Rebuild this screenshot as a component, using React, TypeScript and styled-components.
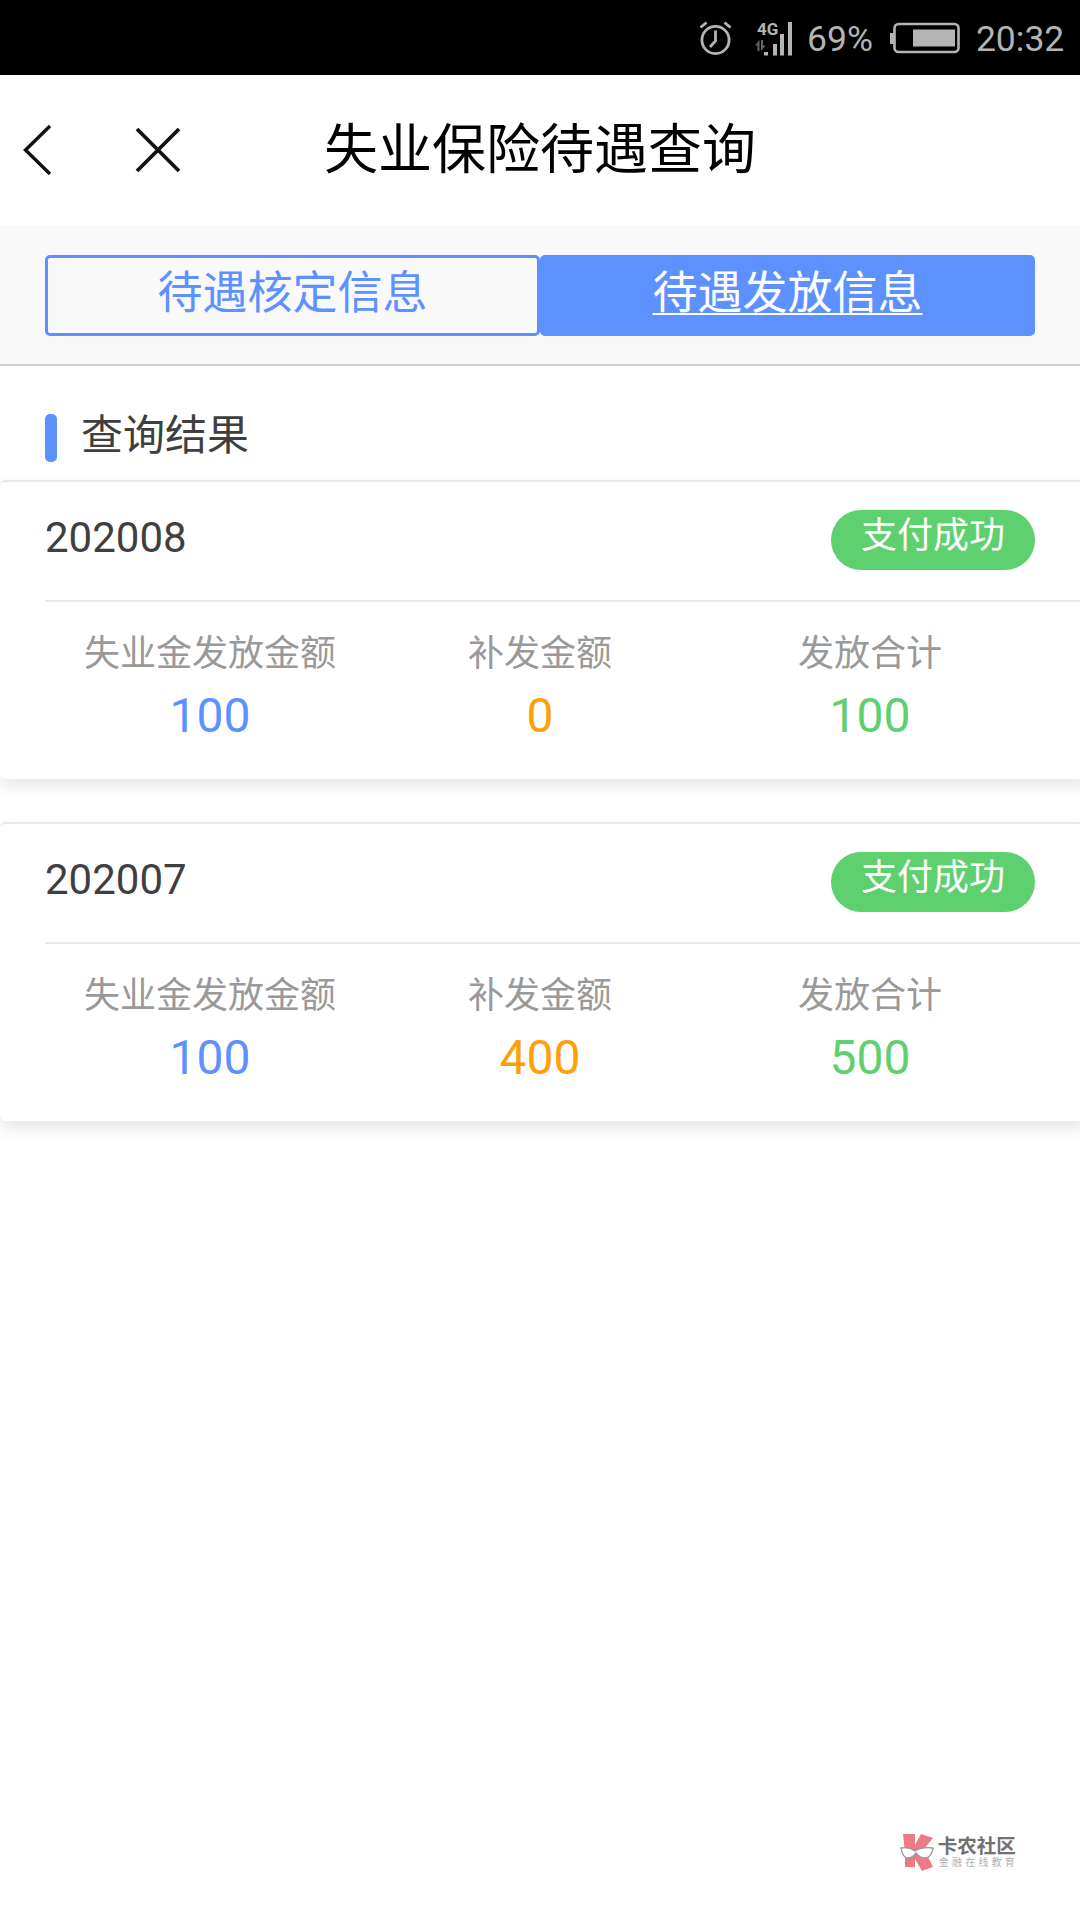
import React from "react";
import styled, { createGlobalStyle } from "styled-components";

const GlobalStyle = createGlobalStyle`
  html, body {
    margin: 0;
    padding: 0;
    background: #fff;
  }
  * {
    box-sizing: border-box;
  }
`;

const FONT = `Roboto, "Noto Sans CJK SC", sans-serif`;

const colors = {
  blue: "#5c91ff",
  orange: "#ff9f0a",
  green: "#5fd070",
};

const Page = styled.div`
  width: 1080px;
  height: 1920px;
  display: flex;
  flex-direction: column;
  overflow: hidden;
  font-family: ${FONT};
  background: #fff;
`;

const StatusBar = styled.div`
  height: 75px;
  background: #000;
  color: #b4b4b4;
  display: flex;
  align-items: center;
  padding: 0 12px 0 699px;
`;

const StatusText = styled.span<{ $ml: number }>`
  font-size: 35.5px;
  line-height: 75px;
  padding-top: 3px;
  margin-left: ${(p) => p.$ml}px;
`;

const StatusIcon = styled.svg<{ $ml?: number }>`
  display: block;
  flex: none;
  margin-left: ${(p) => p.$ml || 0}px;
`;

const NavBar = styled.div`
  height: 150px;
  display: flex;
  align-items: center;
  position: relative;
  padding-left: 22px;
`;

const NavIcon = styled.svg<{ $ml?: number }>`
  display: block;
  margin-left: ${(p) => p.$ml || 0}px;
`;

const Title = styled.div`
  position: absolute;
  left: 0;
  right: 0;
  text-align: center;
  font-size: 54px;
  color: #000;
  line-height: 157px;
`;

const TabBar = styled.div`
  height: 141px;
  padding: 30px 45px 0;
  background: #f9f9f9;
  border-bottom: 2px solid #cfcfcf;
  display: flex;
`;

const Tab = styled.div<{ $active?: boolean }>`
  flex: 1;
  height: 81px;
  border-radius: 5px;
  border: 3px solid ${colors.blue};
  background: ${(p) => (p.$active ? colors.blue : "transparent")};
  color: ${(p) => (p.$active ? "#fff" : colors.blue)};
  text-decoration: ${(p) => (p.$active ? "underline" : "none")};
  text-decoration-thickness: 2px;
  text-underline-offset: 4px;
  font-size: 45px;
  line-height: 72px;
  text-align: center;
`;

const SectionHead = styled.div`
  height: 114px;
  padding-left: 45px;
  display: flex;
  align-items: flex-start;
`;

const SectionMark = styled.div`
  width: 12px;
  height: 48px;
  margin-top: 48px;
  border-radius: 5px;
  background: ${colors.blue};
  margin-right: 24px;
`;

const SectionTitle = styled.div`
  font-size: 42px;
  line-height: 60px;
  margin-top: 40px;
  color: #3f3f3f;
`;

const Card = styled.div<{ $mt?: number }>`
  margin-top: ${(p) => p.$mt || 0}px;
  margin-right: -8px;
  height: 299px;
  background: #fff;
  border-top: 2px solid #e8e8e8;
  border-radius: 6px;
  box-shadow: 0 7px 16px rgba(0, 0, 0, 0.1);
`;

const CardHead = styled.div`
  height: 120px;
  margin-left: 45px;
  margin-right: 8px;
  padding: 28px 45px 0 0;
  border-bottom: 2px solid #e8e8e8;
  display: flex;
  align-items: flex-start;
  justify-content: space-between;
`;

const Period = styled.div`
  font-size: 42px;
  line-height: 60px;
  margin-top: -2px;
  color: #3f3f3f;
`;

const Pill = styled.div`
  width: 204px;
  height: 60px;
  border-radius: 30px;
  background: ${colors.green};
  color: #fff;
  font-size: 36px;
  line-height: 53px;
  text-align: center;
`;

const Stats = styled.div`
  display: grid;
  grid-template-columns: repeat(3, 330px);
  padding: 27px 45px 0;
`;

const Stat = styled.div`
  text-align: center;
`;

const StatLabel = styled.div`
  font-size: 36px;
  line-height: 50px;
  color: #999;
`;

const StatValue = styled.div<{ $color: string }>`
  font-size: 48px;
  line-height: 74px;
  color: ${(p) => p.$color};
`;

const Footer = styled.div`
  margin-top: auto;
  padding: 0 62px 49px 0;
  display: flex;
  justify-content: flex-end;
  align-items: center;
  gap: 4px;
`;

const LogoText = styled.div`
  display: flex;
  flex-direction: column;
`;

const LogoName = styled.div`
  font-size: 19.5px;
  line-height: 21px;
  font-weight: 700;
  color: #707070;
`;

const LogoSub = styled.div`
  font-size: 10px;
  line-height: 11px;
  letter-spacing: 3.2px;
  color: #b0b0b0;
  padding-left: 1px;
`;

const AlarmIcon = () => (
  <StatusIcon width="34" height="36" viewBox="0 0 34 36" fill="none" stroke="#b4b4b4" strokeWidth="2.8">
    <circle cx="16.5" cy="20" r="13.6" />
    <path d="M16.5 10.5v10.5l-5.5 6" />
    <path d="M1.5 7.5l6-5M31.5 7.5l-6-5" />
  </StatusIcon>
);

const SignalIcon = () => (
  <StatusIcon $ml={22} width="38" height="36" viewBox="0 0 38 36" fill="#b4b4b4">
    <text x="2" y="15" fontFamily="Roboto, sans-serif" fontWeight="700" fontSize="17">
      4G
    </text>
    <rect x="9" y="32" width="4" height="3.5" />
    <rect x="18" y="24" width="4" height="11.5" />
    <rect x="25" y="14" width="4" height="21.5" />
    <rect x="33" y="2" width="4" height="33.5" />
    <path d="M0 25.5l4.5-5.5v11h-2v-5.5zM6 20h2v5.5h2.5L6 31z" fill="#666" />
  </StatusIcon>
);

const BatteryIcon = () => (
  <StatusIcon $ml={17} width="70" height="32" viewBox="0 0 70 32" fill="none">
    <rect x="0" y="11" width="4" height="11" fill="#b4b4b4" />
    <rect x="4.5" y="2" width="64" height="28" rx="4" stroke="#b4b4b4" strokeWidth="2.6" />
    <rect x="23" y="7.5" width="42" height="17" fill="#b4b4b4" />
  </StatusIcon>
);

const BackIcon = () => (
  <NavIcon width="34" height="52" viewBox="0 0 34 52" fill="none" stroke="#111" strokeWidth="3.4">
    <path d="M28 2L3.5 26 28 50" />
  </NavIcon>
);

const CloseIcon = () => (
  <NavIcon $ml={79} width="46" height="46" viewBox="0 0 46 46" fill="none" stroke="#111" strokeWidth="3.8">
    <path d="M2 2l42 42M44 2L2 44" />
  </NavIcon>
);

const KLogo = () => (
  <svg width="34" height="38" viewBox="0 0 34 38">
    <path d="M3 1h12v11l6-11 12 4-9 11 9 18-11 4-7-12v8H5V20z" fill="#ee7a85" />
    <path d="M1 15c5-1 10 0 14 3 5-3 11-4 18-3-1 6-3 10-8 10-5 0-7-3-9-5-2 3-4 5-8 5-4 0-6-4-7-10z" fill="#fff" stroke="#999" strokeWidth="1.4" />
  </svg>
);

type RecordItem = {
  period: string;
  reissue: string;
  total: string;
  mt?: number;
};

const records: RecordItem[] = [
  { period: "202008", reissue: "0", total: "100" },
  { period: "202007", reissue: "400", total: "500", mt: 43 },
];

export default function App() {
  return (
    <Page>
      <GlobalStyle />
      <StatusBar>
        <AlarmIcon />
        <SignalIcon />
        <StatusText $ml={14}>69%</StatusText>
        <BatteryIcon />
        <StatusText $ml={16}>20:32</StatusText>
      </StatusBar>
      <NavBar>
        <BackIcon />
        <CloseIcon />
        <Title>失业保险待遇查询</Title>
      </NavBar>
      <TabBar>
        <Tab>待遇核定信息</Tab>
        <Tab $active>待遇发放信息</Tab>
      </TabBar>
      <SectionHead>
        <SectionMark />
        <SectionTitle>查询结果</SectionTitle>
      </SectionHead>
      {records.map((r) => (
        <Card key={r.period} $mt={r.mt}>
          <CardHead>
            <Period>{r.period}</Period>
            <Pill>支付成功</Pill>
          </CardHead>
          <Stats>
            <Stat>
              <StatLabel>失业金发放金额</StatLabel>
              <StatValue $color={colors.blue}>100</StatValue>
            </Stat>
            <Stat>
              <StatLabel>补发金额</StatLabel>
              <StatValue $color={colors.orange}>{r.reissue}</StatValue>
            </Stat>
            <Stat>
              <StatLabel>发放合计</StatLabel>
              <StatValue $color={colors.green}>{r.total}</StatValue>
            </Stat>
          </Stats>
        </Card>
      ))}
      <Footer>
        <KLogo />
        <LogoText>
          <LogoName>卡农社区</LogoName>
          <LogoSub>金融在线教育</LogoSub>
        </LogoText>
      </Footer>
    </Page>
  );
}
